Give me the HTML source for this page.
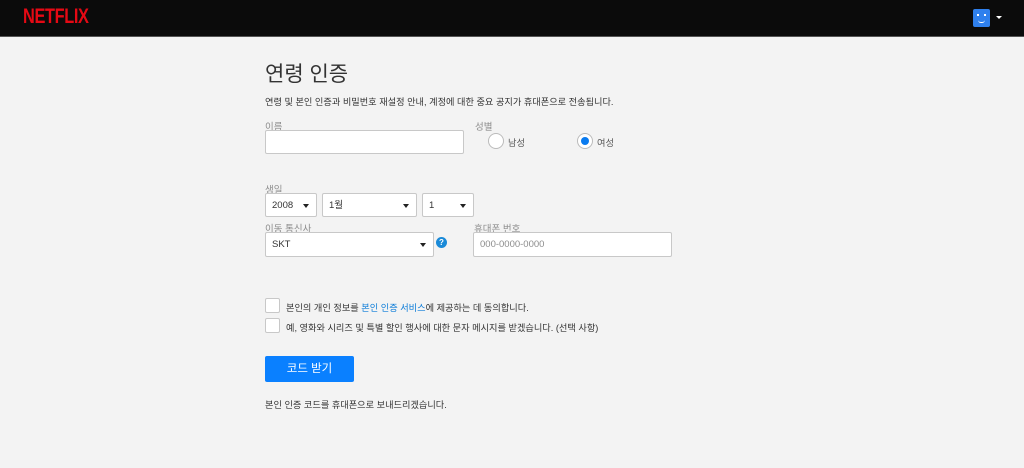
<!DOCTYPE html><html><head><meta charset="utf-8"><style>
body{margin:0;width:1024px;height:468px;background:#f3f3f3;font-family:"Liberation Sans","Noto Sans CJK KR",sans-serif;position:relative;overflow:hidden;color:#333}
.a{position:absolute}
.hdr{left:0;top:0;width:1024px;height:36px;background:#0b0b0b;border-bottom:1px solid #555}
.lbl{font-size:9.5px;color:#8c8c8c}
.box{background:#fff;border:1px solid #c8c8c8;box-sizing:border-box;border-radius:2px}
.sel{font-size:9.5px;color:#333;line-height:23px;padding-left:6px}
.sel:after{content:"";position:absolute;right:7px;top:10px;border-left:3px solid transparent;border-right:3px solid transparent;border-top:4px solid #222}
.t{font-size:9.2px;color:#333}
</style></head><body>
<div class="a hdr"></div>
<div class="a" style="left:23px;top:5px;color:#e50914;font-weight:bold;font-size:21px;letter-spacing:-0.5px;transform:scaleX(0.78);transform-origin:left">NETFLIX</div>
<div class="a" style="left:973px;top:9px;width:17px;height:18px;background:#2f80ed;border-radius:2px"></div>
<div class="a" style="left:977px;top:14px;width:2px;height:2px;background:#fff"></div>
<div class="a" style="left:984px;top:14px;width:2px;height:2px;background:#fff"></div>
<div class="a" style="left:978px;top:20px;width:7px;height:2px;border-bottom:1px solid #fff;border-radius:0 0 4px 4px"></div>
<div class="a" style="left:996px;top:16px;border-left:3px solid transparent;border-right:3px solid transparent;border-top:3px solid #fff"></div>

<div class="a" style="left:265px;top:58px;font-size:21px;color:#333">연령 인증</div>
<div class="a t" style="left:265px;top:94px">연령 및 본인 인증과 비밀번호 재설정 안내, 계정에 대한 중요 공지가 휴대폰으로 전송됩니다.</div>

<div class="a lbl" style="left:265px;top:119px">이름</div>
<div class="a box" style="left:265px;top:130px;width:199px;height:24px"></div>
<div class="a lbl" style="left:475px;top:119px">성별</div>
<div class="a" style="left:488px;top:133px;width:14px;height:14px;border:1px solid #bbb;border-radius:50%;background:#fff"></div>
<div class="a t" style="left:508px;top:135px;color:#555">남성</div>
<div class="a" style="left:577px;top:133px;width:14px;height:14px;border:1px solid #bbb;border-radius:50%;background:#fff"></div>
<div class="a" style="left:581px;top:137px;width:8px;height:8px;border-radius:50%;background:#0a7bf0"></div>
<div class="a t" style="left:597px;top:135px;color:#555">여성</div>

<div class="a lbl" style="left:265px;top:182px">생일</div>
<div class="a box sel" style="left:265px;top:193px;width:52px;height:24px">2008</div>
<div class="a box sel" style="left:322px;top:193px;width:95px;height:24px">1월</div>
<div class="a box sel" style="left:422px;top:193px;width:52px;height:24px">1</div>

<div class="a lbl" style="left:265px;top:221px">이동 통신사</div>
<div class="a box sel" style="left:265px;top:232px;width:169px;height:25px;line-height:24px">SKT</div>
<div class="a" style="left:436px;top:237px;width:11px;height:11px;border-radius:50%;background:#1a8ad8;color:#fff;font-size:8px;font-weight:bold;text-align:center;line-height:11px">?</div>
<div class="a lbl" style="left:474px;top:221px">휴대폰 번호</div>
<div class="a box" style="left:473px;top:232px;width:199px;height:25px;font-size:9.5px;color:#8c8c8c;line-height:23px;padding-left:6px">000-0000-0000</div>

<div class="a box" style="left:265px;top:298px;width:15px;height:15px"></div>
<div class="a t" style="left:286px;top:300px">본인의 개인 정보를 <span style="color:#0a7bd8">본인 인증 서비스</span>에 제공하는 데 동의합니다.</div>
<div class="a box" style="left:265px;top:318px;width:15px;height:15px"></div>
<div class="a t" style="left:286px;top:320px">예, 영화와 시리즈 및 특별 할인 행사에 대한 문자 메시지를 받겠습니다. (선택 사항)</div>

<div class="a" style="left:265px;top:356px;width:89px;height:26px;background:#0a80ff;border-radius:2px;color:#fff;font-size:11.5px;text-align:center;line-height:26px">코드 받기</div>
<div class="a t" style="left:265px;top:397px">본인 인증 코드를 휴대폰으로 보내드리겠습니다.</div>
</body></html>
